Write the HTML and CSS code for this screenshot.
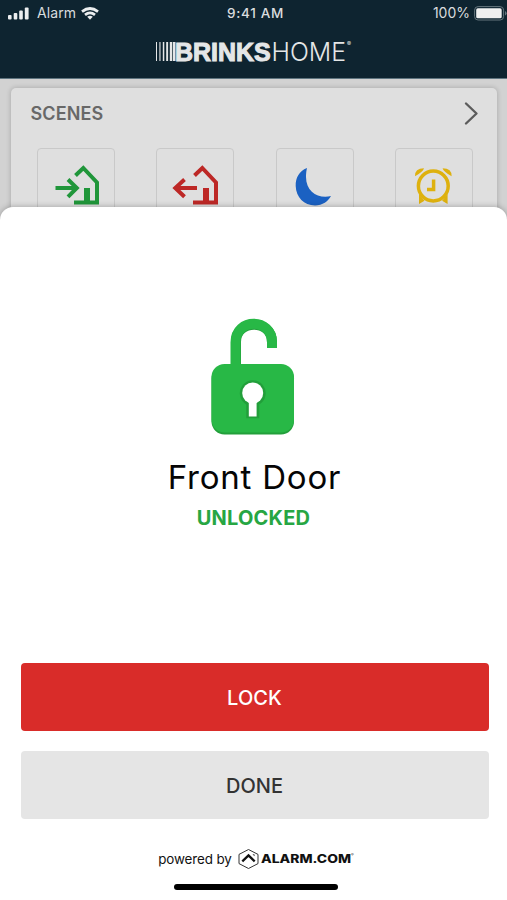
FILE: index.html
```html
<!DOCTYPE html>
<html lang="en">
<head>
<meta charset="utf-8">
<title>Front Door</title>
<link rel="stylesheet" href="styles.css">
</head>
<body>
<main class="phone">
  <header class="header">
    <div class="status">
      <div class="carrier">
        <svg width="22" height="13" viewBox="0 0 22 13" fill="#eceeef"><rect x="0" y="8" width="3.6" height="4.5" rx="1"/><rect x="5.7" y="6" width="3.6" height="6.5" rx="1"/><rect x="11.2" y="3.4" width="3.6" height="9.1" rx="1"/><rect x="16.8" y="0.5" width="3.8" height="12" rx="1"/></svg>
        <span class="carrier-name">Alarm</span>
        <svg width="18" height="13" viewBox="0 0 18 13" fill="none" stroke="#eceeef" stroke-width="2.7"><path d="M1 4.6Q9-1.6 17 4.6M4 7.9Q9 3.9 14 7.9"/><path d="M6.2 9.7Q9 7.6 11.8 9.7L9 12.7Z" fill="#eceeef" stroke="none"/></svg>
      </div>
      <span class="clock">9:41 AM</span>
      <div class="battery"><span>100%</span>
        <svg width="33" height="15" viewBox="0 0 33 15"><rect x=".6" y=".6" width="29" height="13.4" rx="3.5" fill="none" stroke="#65757d"/><rect x="2.2" y="2.3" width="25.5" height="10" rx="1.6" fill="#f0f0f0"/><path d="M31 5v4.6q1.6-.7 1.6-2.3T31 5" fill="#65757d"/></svg>
      </div>
    </div>
    <svg class="brand" width="200" height="26" viewBox="0 0 200 26" fill="#e4e6e7">
      <path d="M2 3h1v19H2zM5.4 3h1.1v19H5.4zM8.8 3h1.5v19H8.8zM12.2 3h1.9v19h-1.9zM15.8 3h2.4v19h-2.4zM18.9 3h2.6v19h-2.6z"/>
      <text class="brand-bold" x="21" y="22" textLength="95.5" lengthAdjust="spacingAndGlyphs">BRINKS</text>
      <text class="brand-light" x="117.5" y="22" textLength="74.5" lengthAdjust="spacingAndGlyphs">HOME</text>
      <text class="brand-mark" x="193" y="7">®</text>
    </svg>
  </header>

  <section class="scenes">
    <div class="panel">
      <div class="panel-head">
        <h2>SCENES</h2>
        <svg width="15" height="24" viewBox="0 0 15 24" fill="none" stroke="#5c5c5c" stroke-width="2.4" stroke-linecap="round" stroke-linejoin="round"><path d="M2 2.5 12.5 12.5 2 22.5"/></svg>
      </div>
      <div class="tiles">
        <div class="tile"><svg width="78" height="70" viewBox="0 0 78 70" fill="none" stroke="#20963a" stroke-width="4"><path d="M18.5 40H40M31 31.5 39.8 40 31 48.8M38.5 27.5 46.3 20 60 34.5V54.5H37"/><path d="M47 40h6v14h-6z" fill="#20963a" stroke="none"/></svg></div>
        <div class="tile"><svg width="78" height="70" viewBox="0 0 78 70" fill="none" stroke="#bd2826" stroke-width="4"><path d="M41 40H19M28.5 31.5 19.3 40 28.5 48.8M38.5 27.5 46.3 20 60 34.5V54.5H37"/><path d="M47 40h6v14h-6z" fill="#bd2826" stroke="none"/></svg></div>
        <div class="tile"><svg width="78" height="70" viewBox="0 0 78 70" fill="#1b61c2"><path d="M32 20C24 23 20.5 30 20.7 38C21 49 29 57.5 40 57.5C47.5 57.5 53.5 53 56 48C44 51 31 44.5 31 29C31 25 31.5 22 32 20Z"/></svg></div>
        <div class="tile"><svg width="78" height="70" viewBox="0 0 78 70" fill="none" stroke="#deb10e"><circle cx="39.3" cy="38" r="14.9" stroke-width="3.5"/><path d="M39.6 31.5V41.5H33" stroke-width="3.5"/><path d="M21 28.2Q20.7 20.5 30 20.3Q29 24 21 28.2ZM57.6 28.2Q58 20.5 48.6 20.3Q49.6 24 57.6 28.2Z" fill="#deb10e" stroke="none"/><path d="M25 46v10l5.5-3.2M53.6 46v10l-5.5-3.2" fill="#deb10e" stroke="none"/></svg></div>
      </div>
    </div>
  </section>

  <section class="sheet">
    <svg class="lock" width="84" height="118" viewBox="0 0 84 118">
      <path d="M25 47V24C25 1 61 1 61 24V30" fill="none" stroke="#239f3b" stroke-width="10"/>
      <path d="M24.5 50V24.5C24.5-.5 61-.5 61 24.5V30" fill="none" stroke="#28b846" stroke-width="10"/>
      <rect x=".5" y="47.5" width="82.5" height="69" rx="13" fill="#239f3b"/>
      <rect x=".5" y="46" width="82.5" height="68.5" rx="13" fill="#28b846"/>
      <path d="M36 99.5V86A12.2 12.2 0 1 1 47.5 86V99.5Z" fill="#239f3b" stroke="#239f3b" stroke-width="1.5"/>
      <circle cx="41.7" cy="75" r="10.5" fill="#fff"/><path d="M37.8 82h7.8v16.5h-7.8z" fill="#fff"/>
    </svg>
    <h1>Front Door</h1>
    <p class="state">UNLOCKED</p>
    <div class="actions">
      <button class="btn btn-lock">LOCK</button>
      <button class="btn btn-done">DONE</button>
    </div>
    <footer>
      <span>powered by</span>
      <svg width="117" height="22" viewBox="0 0 117 22" fill="none">
        <path d="M11.5 1.5 21 6.4V15.6L11.5 20.5 2 15.6V6.4Z" stroke="#333" stroke-width="1"/>
        <path d="M5.3 13.4 11.5 7.4 17.7 13.4" stroke="#111" stroke-width="2.3"/><path d="m15.5 6.3 2 .2v1.8z" fill="#111"/>
        <text class="alarm-word" x="24" y="14.7" textLength="90" lengthAdjust="spacingAndGlyphs" fill="#111">ALARM.COM</text>
        <text class="alarm-mark" x="114" y="8" fill="#333">®</text>
      </svg>
    </footer>
    <div class="home-bar"></div>
  </section>
</main>
</body>
</html>
```

FILE: styles.css
```css
* { box-sizing: border-box; }
body { margin: 0; font-family: Inter, "Liberation Sans", sans-serif; }
svg { display: block; flex: none; overflow: visible; }
h1, h2, p { margin: 0; }

.phone { width: 507px; height: 900px; overflow: hidden; background: #d2d2d2; display: flex; flex-direction: column; }

.header { height: 79px; flex: none; background: #0e2430; border-bottom: 1px solid #5f7580; display: flex; flex-direction: column; align-items: center; }
.status { width: 100%; height: 26px; padding: 0 0 0 8px; display: grid; grid-template-columns: 1fr auto 1fr; align-items: center; color: #d9dcde; font-size: 14px; line-height: 26px; }
.carrier { display: flex; align-items: center; }
.carrier-name { margin: 0 5px 0 7px; letter-spacing: .1px; }
.clock { font-weight: 500; font-size: 13.5px; letter-spacing: .7px; margin-right: 4px; }
.battery { display: flex; align-items: center; justify-content: flex-end; gap: 4px; }
.brand { margin-top: 13px; }
.brand-bold { font: 900 26px "Liberation Sans", sans-serif; stroke: #e4e6e7; stroke-width: 1.1px; }
.brand-light { font: 300 26px Inter, sans-serif; }
.brand-mark { font: 6px Inter, sans-serif; }

.scenes { height: 138px; flex: none; padding: 9px 10px 0 11px; }
.panel { height: 160px; background: #dfdfdf; border-radius: 5px; box-shadow: 0 0 4px 1px rgba(0, 0, 0, .15); }
.panel-head { display: flex; align-items: center; justify-content: space-between; height: 50px; padding: 0 18px 0 19.5px; }
h2 { font-size: 18px; font-weight: 600; color: #686868; letter-spacing: .1px; }
.tiles { display: flex; justify-content: space-between; padding: 10px 24px 0 26px; }
.tile { width: 78px; height: 80px; border: 1px solid #c9c9c9; border-radius: 4px; }
.tile svg { margin: -1px 0 0 -1.5px; }

.sheet { flex: 1; margin-top: -10px; background: #fff; border-radius: 13px 13px 0 0; box-shadow: 0 0 6px rgba(0, 0, 0, .3); position: relative; display: flex; flex-direction: column; align-items: center; }
.lock { margin: 111px 1px 0 0; }
h1 { margin: 18px 0 0 2px; height: 46px; line-height: 46px; font-size: 33px; font-weight: 400; color: #050505; letter-spacing: .8px; }
.state { margin-top: -2px; height: 40px; font-size: 20px; line-height: 40px; font-weight: 700; color: #27a643; letter-spacing: .2px; }
.actions { width: 468px; margin: 125px 0 0 2px; display: flex; flex-direction: column; gap: 20px; }
.btn { height: 68px; border: 0; border-radius: 4px; font: 500 20px Inter, sans-serif; padding: 1px 0 0; }
.btn-lock { background: #d92c29; color: #fff; letter-spacing: .1px; }
.btn-done { background: #e5e5e5; color: #333; }
footer { display: flex; align-items: center; gap: 5px; margin: 28px 0 0 5px; font-size: 13.4px; line-height: 22px; color: #111; }
footer span { padding-top: 1px; letter-spacing: -.1px; }
.alarm-word { font: 800 11.5px Inter, sans-serif; }
.alarm-mark { font: 4px Inter, sans-serif; }
.home-bar { width: 164px; height: 6px; border-radius: 3px; background: #000; margin: 14px 0 0 4px; }
```
